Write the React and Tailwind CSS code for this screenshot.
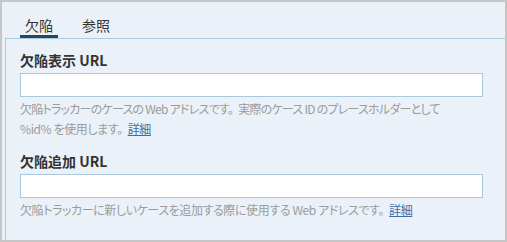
import React from 'react';

const FONT = { fontFamily: '"Noto Sans CJK JP", "Noto Sans", sans-serif' };

const Gap = () => <span className="inline-block w-[5px]" />;

const Field = ({ label, children }) => (
  <div className="flex flex-col">
    <label className="text-[14px] leading-[20px] font-bold text-[#333333]">{label}</label>
    <input
      type="text"
      className="mt-[3px] h-[24px] w-[463px] border border-[#aac8de] bg-white px-2 text-[13px] outline-none"
    />
    <p className="mt-[2px] text-[12px] leading-[20px] tracking-[-0.4px] text-[#9b9b9b] [font-feature-settings:'palt']">
      {children}
    </p>
  </div>
);

const App = () => {
  return (
    <div
      className="flex h-[242px] w-[507px] flex-col overflow-hidden border-2 border-[#c6c6c6] bg-[#eaf1f8]"
      style={FONT}
    >
      <div className="flex h-[36px] items-end gap-[19px] pl-[18px]">
        <button className="h-[36px] border-b-[3px] border-[#2a4559] px-[5px] pt-[12px] text-[14px] leading-[20px] text-[#333333]">
          欠陥
        </button>
        <button className="h-[36px] border-b-[3px] border-transparent px-[5px] pt-[12px] text-[14px] leading-[20px] text-[#333333]">
          参照
        </button>
      </div>
      <div className="ml-[3px] flex-1 border-l border-t border-[#a9c9e1] pl-[14px] pt-[11px]">
        <div className="flex flex-col gap-[12px]">
          <Field label="欠陥表示 URL">
            <span className="tracking-[-0.75px]">
              欠陥トラッカーのケースの Web アドレスです。<Gap />実際のケース ID のプレースホルダーとして
            </span>
            <br />
            %id% を使用します。<Gap />
            <a href="#" className="text-[#3d6fa6] underline">詳細</a>
          </Field>
          <Field label="欠陥追加 URL">
            欠陥トラッカーに新しいケースを追加する際に使用する Web アドレスです。<Gap />
            <a href="#" className="text-[#3d6fa6] underline">詳細</a>
          </Field>
        </div>
      </div>
    </div>
  );
};

export default App;
